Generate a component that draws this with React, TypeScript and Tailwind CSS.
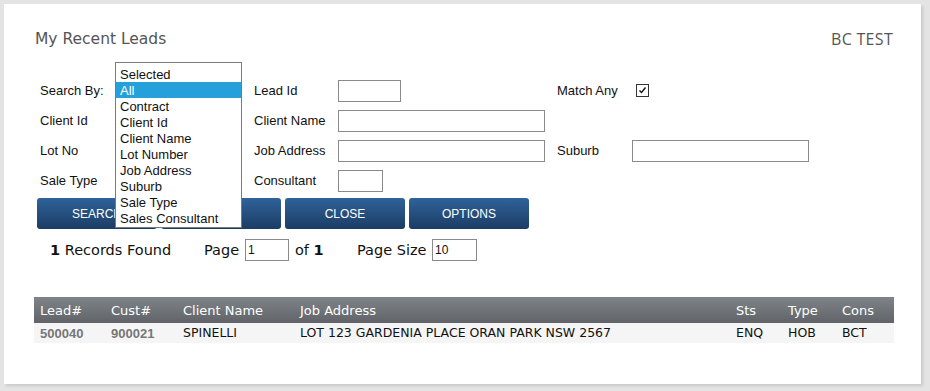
import React from 'react'

const lucida = { fontFamily: '"DejaVu Sans", Verdana, sans-serif' }
const arial = { fontFamily: '"Liberation Sans", Arial, sans-serif' }

const options = [
  'Selected',
  'All',
  'Contract',
  'Client Id',
  'Client Name',
  'Lot Number',
  'Job Address',
  'Suburb',
  'Sale Type',
  'Sales Consultant'
]

const cols = ['Lead#', 'Cust#', 'Client Name', 'Job Address', 'Sts', 'Type', 'Cons']

const Box = ({ w }: { w: string }) => (
  <div className={`h-[22px] border border-[#8a8a8a] bg-white ${w}`} />
)

const Label = ({ children }: { children?: React.ReactNode }) => (
  <div className="flex h-[30px] items-center pt-[1px] text-[13px] text-[#111]">{children}</div>
)

const Btn = ({ children }: { children?: React.ReactNode }) => (
  <button className="flex h-[31px] w-[120px] items-center justify-center rounded-[3px] bg-gradient-to-b from-[#30629a] to-[#1b3d64] pt-[1px] text-[12px] text-white">
    {children}
  </button>
)

export default function App() {
  return (
    <div className="h-[391px] w-[930px] bg-[#e4e4e4] pl-[4px] pt-[4px]">
      <div className="h-[380px] w-[917px] bg-white shadow-[2px_2px_3px_rgba(0,0,0,0.12)]">
        <div className="flex items-center justify-between pl-[31px] pr-[28px] pt-[27px]">
          <span className="text-[15.5px] leading-[16px] text-[#555]" style={lucida}>
            My Recent Leads
          </span>
          <span className="text-[16px] leading-[16px] tracking-[0.3px] text-[#555]" style={{ fontFamily: '"Open Sans", sans-serif' }}>
            BC TEST
          </span>
        </div>

        <div className="relative mt-[28px] pl-[36px]" style={arial}>
          <div className="grid grid-cols-[214px_84px_219px_75px_auto]">
            <Label>Search By:</Label>
            <Label>Lead Id</Label>
            <Label><Box w="w-[63px]" /></Label>
            <Label>Match Any</Label>
            <Label>
              <span className="ml-[4px] flex h-[13px] w-[13px] items-center justify-center border border-[#333] bg-white">
                <svg width="9" height="9" viewBox="0 0 9 9">
                  <path d="M1.5 4.5 L3.5 6.5 L7.5 1.5" stroke="#111" strokeWidth="1.4" fill="none" />
                </svg>
              </span>
            </Label>

            <Label>Client Id</Label>
            <Label>Client Name</Label>
            <Label><Box w="w-[207px]" /></Label>
            <Label />
            <Label />

            <Label>Lot No</Label>
            <Label>Job Address</Label>
            <Label><Box w="w-[207px]" /></Label>
            <Label>Suburb</Label>
            <Label><Box w="w-[177px]" /></Label>

            <Label>Sale Type</Label>
            <Label>Consultant</Label>
            <Label><Box w="w-[45px]" /></Label>
            <Label />
            <Label />
          </div>

          <div className="ml-[-3px] mt-[3px] flex gap-[4px]">
            <Btn>SEARCH</Btn>
            <Btn />
            <Btn>CLOSE</Btn>
            <Btn>OPTIONS</Btn>
          </div>

          <div className="absolute left-[111px] top-[-13px] z-10 h-[166px] w-[127px] border border-[#7a7a7a] bg-white pt-[3px] text-[13px] text-[#111]">
            {options.map((o) => (
              <div
                key={o}
                className={`h-[16px] pl-[4px] leading-[17px] ${o === 'All' ? 'bg-[#26a0da] text-white' : ''}`}
              >
                {o}
              </div>
            ))}
          </div>
        </div>

        <div className="mt-[10px] flex h-[22px] items-center pl-[46px] text-[14.5px] text-[#111]" style={lucida}>
          <span className="w-[154px] pt-[1px]"><b>1</b> Records Found</span>
          <span className="w-[41px] pt-[1px]">Page</span>
          <div className="flex h-[22px] w-[44px] items-center border border-[#8a8a8a] pl-[2px] text-[12px]" style={arial}>1</div>
          <span className="ml-[6px] w-[62px] pt-[1px]">of <b>1</b></span>
          <span className="w-[75px] pt-[1px]">Page Size</span>
          <div className="flex h-[22px] w-[45px] items-center border border-[#8a8a8a] pl-[2px] text-[12px]" style={arial}>10</div>
        </div>

        <div className="ml-[30px] mt-[36px] w-[860px]">
          <div
            className="grid h-[26px] grid-cols-[71px_72px_117px_436px_52px_54px_1fr] items-center bg-gradient-to-b from-[#7f8488] to-[#606468] pl-[6px] pt-[1px] text-[13px] text-white"
            style={lucida}
          >
            {cols.map((c) => (
              <span key={c}>{c}</span>
            ))}
          </div>
          <div className="grid h-[20px] grid-cols-[71px_72px_117px_436px_52px_54px_1fr] items-center bg-[#f5f5f5] pl-[6px] pt-[1px] text-[12.5px] text-[#111]" style={lucida}>
            <span className="text-[13px] font-bold text-[#777]" style={arial}>500040</span>
            <span className="text-[13px] font-bold text-[#777]" style={arial}>900021</span>
            <span>SPINELLI</span>
            <span>LOT 123 GARDENIA PLACE ORAN PARK NSW 2567</span>
            <span>ENQ</span>
            <span>HOB</span>
            <span>BCT</span>
          </div>
        </div>
      </div>
    </div>
  )
}
